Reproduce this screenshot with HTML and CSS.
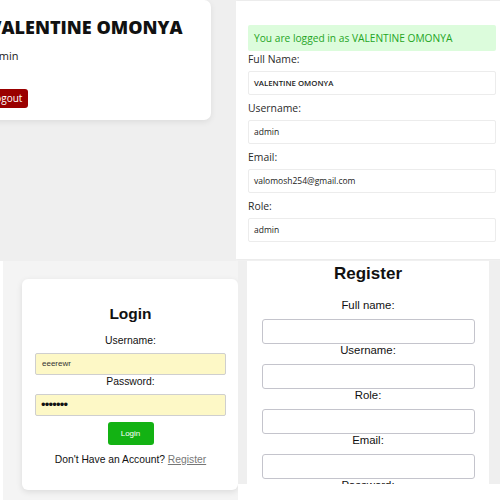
FILE: index.html
```html
<!DOCTYPE html>
<html lang="en">
<head>
<meta charset="utf-8">
<title>Accounts</title>
<link rel="stylesheet" href="styles.css">
</head>
<body>
<div class="collage">
  <div class="row row-top">
    <section class="shot shot-profile">
      <div class="profile-card">
        <h1 class="profile-name">VALENTINE OMONYA</h1>
        <p class="profile-role">admin</p>
        <button class="btn-logout" type="button">Logout</button>
      </div>
    </section>
    <section class="shot shot-details">
      <div class="details-card">
        <div class="alert">You are logged in as VALENTINE OMONYA</div>
        <div class="d-label">Full Name:</div>
        <div class="d-field d-field-name">VALENTINE OMONYA</div>
        <div class="d-label">Username:</div>
        <div class="d-field">admin</div>
        <div class="d-label">Email:</div>
        <div class="d-field">valomosh254@gmail.com</div>
        <div class="d-label">Role:</div>
        <div class="d-field">admin</div>
      </div>
    </section>
  </div>
  <div class="row row-bottom">
    <section class="shot shot-login">
      <form class="login-card">
        <h2 class="login-title">Login</h2>
        <label class="l-label">Username:</label>
        <div class="l-input">eeerewr</div>
        <label class="l-label">Password:</label>
        <div class="l-input l-input-pass">&#8226;&#8226;&#8226;&#8226;&#8226;&#8226;&#8226;</div>
        <button class="btn-login" type="button">Login</button>
        <p class="l-foot">Don't Have an Account? <a class="l-link" href="#">Register</a></p>
      </form>
    </section>
    <section class="shot shot-register">
      <form class="register-card">
        <h2 class="reg-title">Register</h2>
        <label class="r-label">Full name:</label>
        <div class="r-input"></div>
        <label class="r-label">Username:</label>
        <div class="r-input"></div>
        <label class="r-label">Role:</label>
        <div class="r-input"></div>
        <label class="r-label">Email:</label>
        <div class="r-input"></div>
        <label class="r-label">Password:</label>
        <div class="r-input"></div>
      </form>
    </section>
  </div>
</div>
</body>
</html>
```
FILE: styles.css
```css
* { box-sizing: border-box; }
html, body { margin: 0; padding: 0; background: #ffffff; }
.collage { width: 500px; height: 500px; overflow: hidden; display: flex; flex-direction: column; }
.row { display: flex; }
.row-top { height: 261px; }
.row-bottom { height: 239px; padding-left: 3px; }
.shot { overflow: hidden; }

/* Profile shot */
.shot-profile { width: 236px; background: #efefef; }
.profile-card {
  width: 241px; margin-left: -30px; height: 120px;
  background: #fff; border-radius: 7px;
  box-shadow: 0 2px 6px rgba(0,0,0,0.08);
  padding: 16px 16px 0 19px;
  font-family: "Open Sans", "DejaVu Sans", sans-serif;
}
.profile-name { margin: 0; font-size: 18px; line-height: 23px; font-weight: 800; color: #111; white-space: nowrap; }
.profile-role { margin: 9px 0 0 -3px; font-size: 11px; line-height: 15px; color: #222; }
.btn-logout {
  margin: 26px 0 0 -5px; height: 19px; padding: 0 6px;
  border: 0; border-radius: 3px; background: #9a0000; color: #fff;
  font-family: "Open Sans", sans-serif; font-size: 10px; line-height: 19px;
}

/* Details shot */
.shot-details { flex: 1; background: #f3f3f3; }
.details-card {
  height: 258px; margin-top: 1px; background: #fff;
  box-shadow: 0 0 3px rgba(0,0,0,0.08);
  padding: 24px 0 0 12px; width: 272px;
  font-family: "Open Sans", sans-serif;
}
.alert {
  width: 248px; height: 26px; padding: 0 6px; line-height: 26px;
  background: #dcfcdc; color: #1fa51f; font-size: 10.2px; border-radius: 2px; white-space: nowrap;
}
.d-label { font-size: 10.4px; line-height: 16px; color: #2a2a2a; margin-bottom: 4px; }
.d-field {
  width: 248px; height: 24px; border: 1px solid #ececec; border-radius: 2px;
  padding-left: 5px; line-height: 22px; font-size: 8.5px; color: #222; margin-bottom: 5px;
}
.d-field-name { font-weight: 600; font-size: 7.8px; }

/* Login shot */
.shot-login { width: 235px; background: #f4f4f4; padding: 18px 0 0 19px; }
.login-card {
  width: 216px; height: 211px; background: #fff; border-radius: 6px;
  box-shadow: 0 2px 6px rgba(0,0,0,0.1);
  padding: 25px 12px 0 13px; margin: 0;
  display: flex; flex-direction: column; align-items: center;
  font-family: "Liberation Sans", Arial, sans-serif; color: #111;
}
.login-title { margin: 0; font-size: 15.5px; line-height: 19px; font-weight: 700; }
.l-label { font-size: 10.4px; line-height: 12px; margin-top: 12px; margin-bottom: 6px; }
.l-input + .l-label { margin-top: 1px; }
.l-input {
  width: 191px; height: 22px; background: #fdf8c6; border: 1px solid #cfcfcf; border-radius: 2px;
  padding-left: 6px; font-size: 8px; line-height: 20px; color: #333; align-self: flex-start;
}
.l-input-pass { font-size: 13px; letter-spacing: -0.8px; color: #111; padding-left: 5px; }
.btn-login {
  margin-top: 6px; width: 46px; height: 23px; border: 0; border-radius: 3px;
  background: #13b213; color: #fff; font-family: "Liberation Sans", Arial, sans-serif; font-size: 8px; padding: 0;
}
.l-foot { margin: 9px 0 0; font-size: 10.3px; line-height: 12px; }
.l-link { color: #777; }

/* Register shot */
.shot-register { width: 262px; height: 223px; background: #efefef; padding: 0 11px 0 9px; }
.register-card {
  height: 223px; background: #fff; margin: 0; padding-top: 3px; overflow: hidden;
  display: flex; flex-direction: column; align-items: center;
  font-family: "Liberation Sans", Arial, sans-serif; color: #111;
}
.reg-title { margin: 0; font-size: 17px; line-height: 20px; font-weight: 700; }
.r-label { font-size: 11.4px; line-height: 13px; margin-top: 15px; margin-bottom: 7px; }
.r-input + .r-label { margin-top: 0; }
.r-input { width: 213px; height: 25px; border: 1px solid #c4c4cc; border-radius: 3px; flex-shrink: 0; }
```
